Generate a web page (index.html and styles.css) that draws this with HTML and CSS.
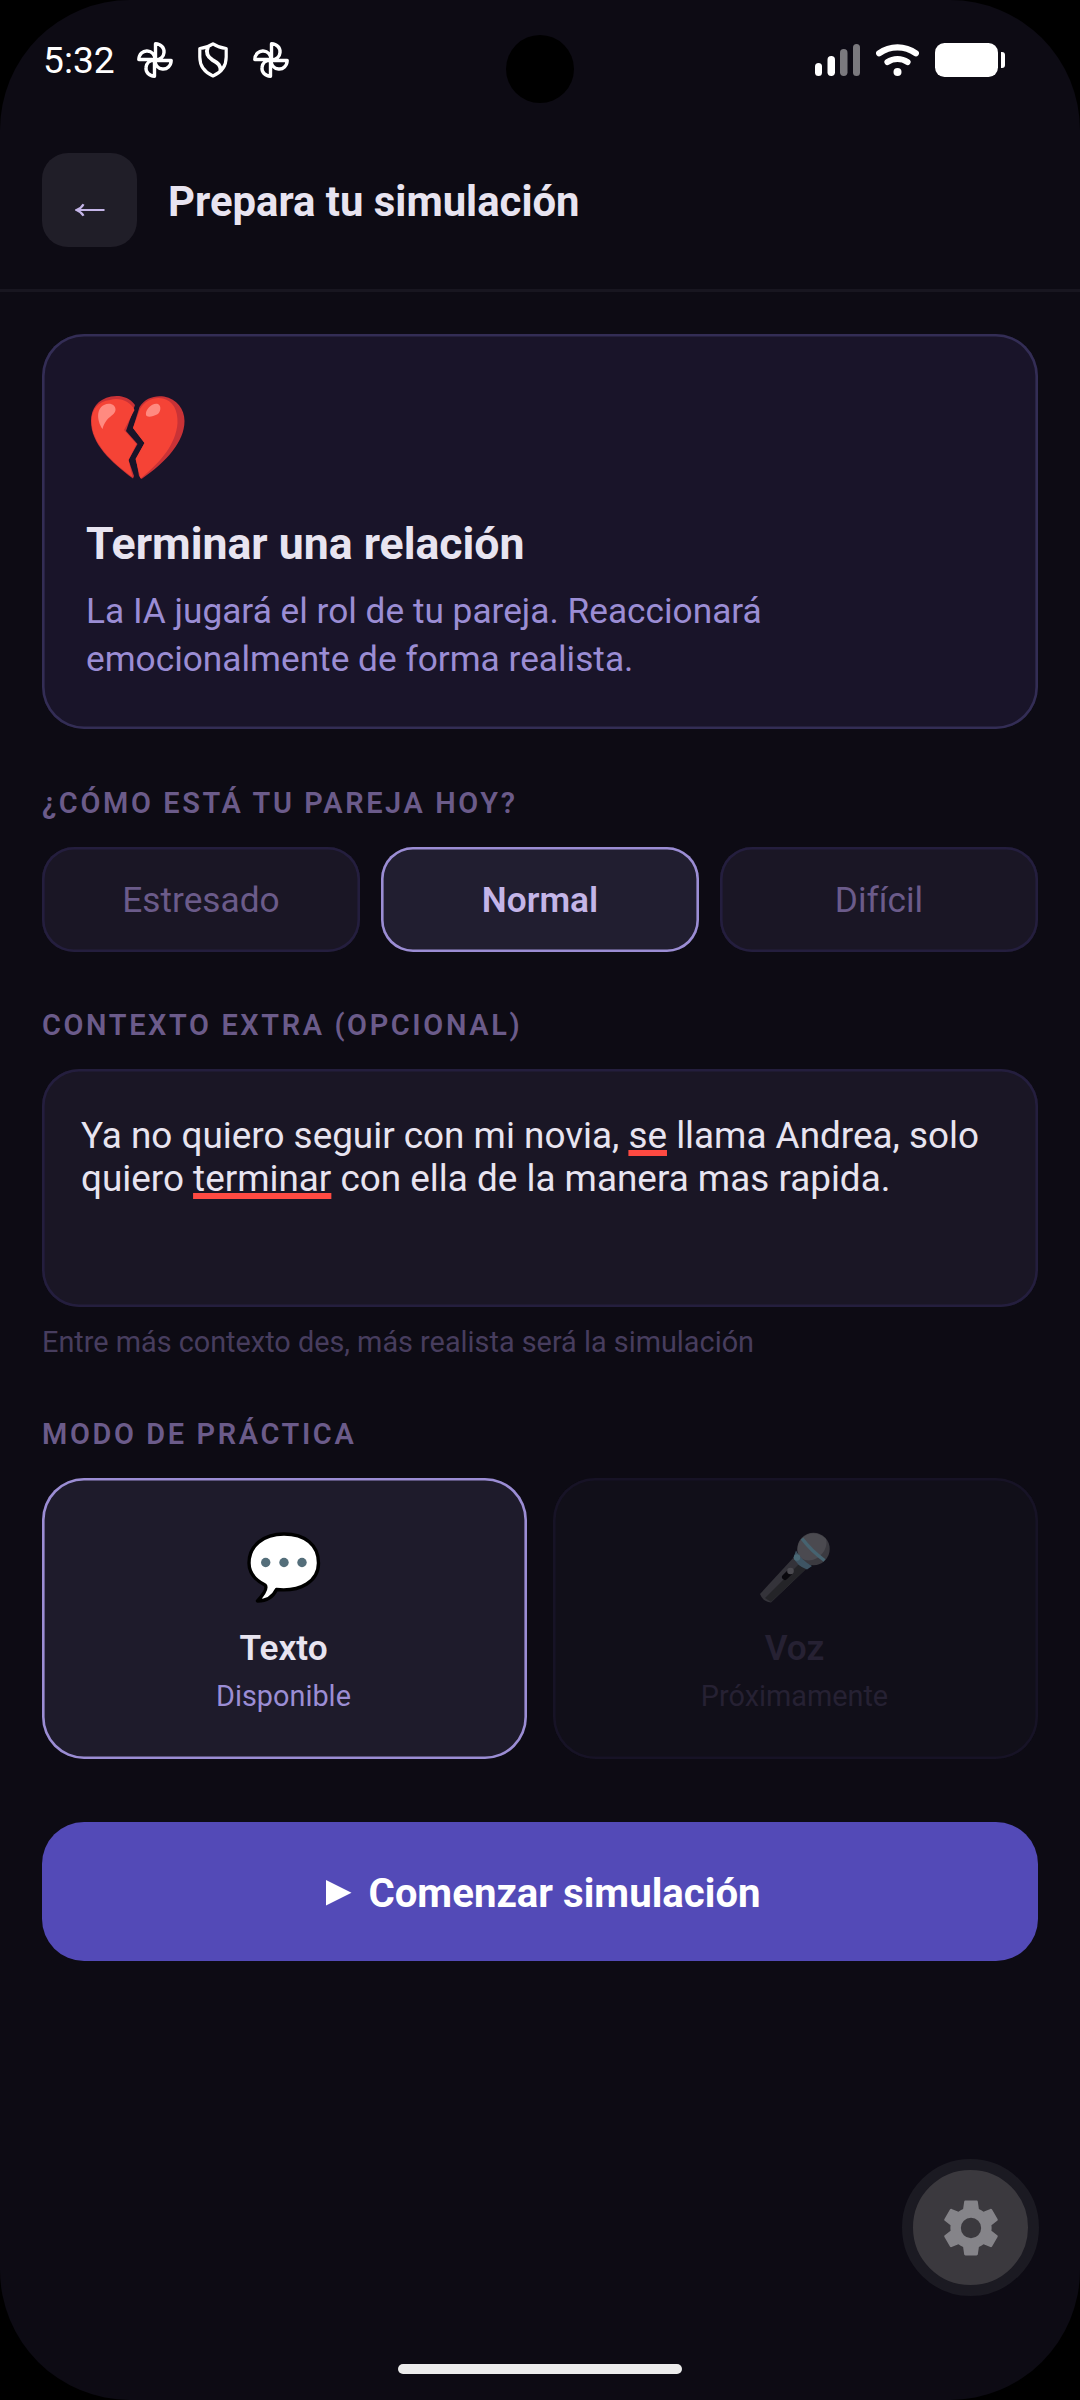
FILE: index.html
```html
<!DOCTYPE html>
<html lang="es">
<head>
<meta charset="utf-8">
<title>Prepara tu simulación</title>
<link rel="stylesheet" href="styles.css">
</head>
<body>
<svg class="defs" width="0" height="0" aria-hidden="true">
  <symbol id="pinwheel" viewBox="0 0 36 36">
    <g fill="none" stroke="#fff" stroke-width="3.4" stroke-linejoin="round">
      <path d="M18.500 18V1.800C24 2 27.500 6 27 10.500C26.700 14.500 23.500 17.800 18.500 18Z"/>
      <path d="M18 18.500H34.200C34 24 30 27.500 25.500 27C21.500 26.700 18.200 23.500 18 18.500Z"/>
      <path d="M17.500 18V34.200C12 34 8.500 30 9 25.500C9.300 21.500 12.500 18.200 17.500 18Z"/>
      <path d="M18 17.500H1.800C2 12 6 8.500 10.500 9C14.500 9.300 17.800 12.500 18 17.500Z"/>
    </g>
  </symbol>
</svg>
<div class="screen">
  <div class="camera"></div>
  <div class="status">
    <span class="time">5:32</span>
    <svg class="pin" width="36" height="36"><use href="#pinwheel"/></svg>
    <svg class="shield" width="30" height="36" viewBox="0 0 30 36" fill="none" stroke="#fff" stroke-width="3.2" stroke-linejoin="round"><path d="M15 1.800C11 4.500 6.500 6 1.800 6.500V15C1.800 24 7 30.500 15 34C23 30.500 28.200 24 28.200 15V6.500C23.500 6 19 4.500 15 1.800Z"/><path d="M10 4.500C7.500 11 9.500 15 14.500 18C20 21 23 23.500 22.500 29" stroke-width="3.800"/></svg>
    <svg class="pin" width="36" height="36"><use href="#pinwheel"/></svg>
    <svg class="signal" width="45" height="32" viewBox="0 0 45 32" fill="#fff"><rect x="0" y="19" width="7" height="13" rx="3.500"/><rect x="12.500" y="12" width="7.500" height="20" rx="3.700"/><g opacity=".45"><rect x="25" y="5" width="7.500" height="27" rx="3.700"/><rect x="38" y="0" width="7" height="32" rx="3.500"/></g></svg>
    <svg class="wifi" width="43" height="32" viewBox="0 0 43 32" fill="none" stroke="#fff" stroke-width="6.200" stroke-linecap="round"><path d="M3.200 9.300C14 1.300 29 1.300 39.800 9.300"/><path d="M11.500 18C17.500 14 25.500 14 31.500 18"/><circle cx="21.500" cy="28" r="4" fill="#fff" stroke="none"/></svg>
    <svg class="battery" width="70" height="34" viewBox="0 0 70 34" fill="#fff"><rect width="63" height="34" rx="9.500"/><path d="M66 9H67C69 9 70 10 70 12V22C70 24 69 25 67 25H66Z"/></svg>
  </div>
  <header class="header">
    <button class="back" aria-label="Volver"><svg width="30" height="14" viewBox="0 0 30 14" fill="none" stroke="#c4b5e8" stroke-width="2.200"><path d="M1.500 7H29.500M8.500 1.200Q6.500 5 1.500 7Q6.500 9 8.500 12.800"/></svg></button>
    <h1>Prepara tu simulación</h1>
  </header>
  <main>
    <section class="scenario">
      <svg class="heart" width="94" height="83" viewBox="0 0 94 83">
        <path fill="#c93236" d="M44 9C38 1 29-1 20 .600C7 3 0 13 0 25C0 48 20 66 42 82.500L43 80L37.500 64L46.500 48L35 35Z"/>
        <path fill="#f54336" d="M43.500 14C40 6 29 1 19 4C7 5 .500 14 .500 25C1 48 21 66 41.500 81L37.500 64L45.500 48L33 34Z"/>
        <path fill="#c93236" d="M48.500 11C54 2 64-1 73 .500C86 3 93.500 13 93.500 25C93.500 46 75 66 50.500 83L48 80L45 63L53.500 47L42 32Z"/>
        <path fill="#f54336" d="M49 13C54 4 64 .500 72 2.500C82 5 87 14 86.500 27C85 48 70 66 49.500 82.500L44.500 63L53.500 47L42 32Z"/>
        <path fill="#ff8a80" d="M11.500 33C6 25 5 13 13 9C19 6 25 9 24.500 14C24 20 15 20 11.500 33Z"/>
        <path fill="#ff8a80" d="M55 19C54 13 62 6 67 8C71 10 69.500 17 66 18.500C62 20.500 56 22 55 19Z"/>
      </svg>
      <h2>Terminar una relación</h2>
      <p>La IA jugará el rol de tu pareja. Reaccionará emocionalmente de forma realista.</p>
    </section>

    <h3 class="label">¿CÓMO ESTÁ TU PAREJA HOY?</h3>
    <div class="moods">
      <button class="mood">Estresado</button>
      <button class="mood selected">Normal</button>
      <button class="mood">Difícil</button>
    </div>

    <h3 class="label">CONTEXTO EXTRA (OPCIONAL)</h3>
    <div class="context">Ya no quiero seguir con mi novia, <span class="typo">se</span> llama Andrea, solo quiero <span class="typo">terminar</span> con ella de la manera mas rapida.</div>
    <p class="hint">Entre más contexto des, más realista será la simulación</p>

    <h3 class="label">MODO DE PRÁCTICA</h3>
    <div class="modes">
      <div class="mode selected">
        <svg width="74" height="72" viewBox="0 0 74 72"><path fill="#fff" stroke="#000" stroke-width="3.400" stroke-linejoin="round" d="M37 2C16 2 2 14 2 31C2 41 8 48 18 53C21 56 16 63 10.500 69C19 69 26 65 29.500 57.500C54 60 71.500 49 71.500 31C71.500 13 58 2 37 2Z"/><g fill="#546e7a"><circle cx="18.700" cy="30.500" r="4.700"/><circle cx="37" cy="30.500" r="4.700"/><circle cx="55" cy="30.500" r="4.700"/></g></svg>
        <strong>Texto</strong>
        <span>Disponible</span>
      </div>
      <div class="mode disabled">
        <svg width="70" height="70" viewBox="0 0 70 70">
          <path fill="#34333a" d="M0 61L34 24L46 36L11 69.500Q3 69 0 61Z"/>
          <path fill="#242428" d="M5 65L40 30L46 36L11 69Z"/>
          <path d="M25 44L29 40" stroke="#09080d" stroke-width="6" stroke-linecap="round"/><circle cx="30.500" cy="38" r="3.300" fill="#4b4a50"/>
          <circle cx="53.500" cy="16" r="16.200" fill="#3b3a40"/>
          <path fill="#4b4a50" d="M37.500 18A16.200 16.200 0 0 1 66 6C69 16 58 30 45 27Q39 25 37.500 18Z"/>
          <path d="M42 5.500Q51 17.500 64.500 27.500" fill="none" stroke="#466370" stroke-width="3.400"/>
          <path fill="#3e5463" d="M36 17.500Q41 27 52 33L47 36.500Q37 33 33.500 24.500Z"/><circle cx="37" cy="24.500" r="3.200" fill="#4a6875"/>
        </svg>
        <strong>Voz</strong>
        <span>Próximamente</span>
      </div>
    </div>

    <button class="start"><svg width="26" height="26" viewBox="0 0 26 26" fill="#fff"><path d="M0 0L25.500 12.700L0 25.500Z"/></svg>Comenzar simulación</button>
  </main>
  <div class="fab"><svg width="66" height="66" viewBox="0 0 24 24" fill="#858489"><path d="M19.430 12.980c.04-.32.07-.64.07-.98s-.03-.66-.07-.98l2.110-1.650c.19-.15.24-.42.12-.64l-2-3.460c-.12-.22-.39-.3-.61-.22l-2.490 1c-.52-.4-1.080-.73-1.690-.98l-.38-2.650C14.460 2.180 14.250 2 14 2h-4c-.25 0-.46.18-.49.42l-.38 2.650c-.61.25-1.170.59-1.690.98l-2.490-1c-.23-.09-.49 0-.61.22l-2 3.460c-.13.22-.07.49.12.64l2.110 1.650c-.04.32-.07.65-.07.98s.03.66.07.98l-2.110 1.650c-.19.15-.24.42-.12.64l2 3.460c.12.22.39.3.61.22l2.490-1c.52.4 1.080.73 1.690.98l.38 2.650c.03.24.24.42.49.42h4c.25 0 .46-.18.49-.42l.38-2.650c.61-.25 1.170-.59 1.690-.98l2.490 1c.23.09.49 0 .61-.22l2-3.460c.12-.22.07-.49-.12-.64l-2.110-1.650zM12 15.700a3.700 3.700 0 1 1 0-7.400 3.700 3.700 0 0 1 0 7.400z"/></svg></div>
  <div class="homebar"></div>
</div>
</body>
</html>
```
FILE: styles.css
```css
* { box-sizing: border-box; margin: 0; padding: 0; }
body { background: #000; font-family: Roboto, "Noto Sans", sans-serif; }
button { border: 0; font-family: inherit; }
.defs { position: absolute; }

.screen {
  position: relative;
  width: 1080px;
  height: 2400px;
  overflow: hidden;
  border-radius: 130px;
  background: #0d0b14;
}
.camera {
  position: absolute;
  left: 506px;
  top: 35px;
  width: 68px;
  height: 68px;
  border-radius: 50%;
  background: #000;
}

/* Status bar */
.status {
  display: flex;
  align-items: center;
  height: 120px;
  padding: 0 75px 0 43px;
}
.time { width: 94px; color: #fff; font-size: 37.200px; line-height: 44px; margin-top: -1px; }
.shield { margin: 0 25px; }
.signal { margin-left: auto; }
.wifi { margin: 0 16px; }

/* Header */
.header {
  display: flex;
  align-items: center;
  gap: 31px;
  height: 172px;
  padding: 33px 42px 45px;
  box-shadow: inset 0 -3px #181620;
}
.back {
  display: flex;
  align-items: center;
  justify-content: center;
  width: 95px;
  height: 94px;
  padding-top: 19px;
  border-radius: 26px;
  background: #201e28;
}
h1 { padding-top: 4px; color: #e8e4f0; font-size: 41.850px; font-weight: 700; line-height: 50px; }

main { padding: 42px; }

/* Scenario card */
.scenario {
  height: 395px;
  padding: 62px 44px;
  border-radius: 42px;
  background: #191429;
  box-shadow: inset 0 0 0 2.600px #332d55;
}
.heart { display: block; margin-left: 5px; }
h2 { margin-top: 38px; color: #e8e4f0; font-size: 44.600px; font-weight: 700; line-height: 54px; }
.scenario p { margin-top: 16px; color: #9b8dd4; font-size: 35.250px; line-height: 48px; }

.label {
  color: #6b5b8a;
  font-size: 28.900px;
  font-weight: 600;
  line-height: 34px;
  letter-spacing: 2.640px;
}

/* Mood picker */
.scenario + .label { margin-top: 57px; }
.moods { display: flex; gap: 21px; margin-top: 27px; }
.mood {
  flex: 1;
  height: 105px;
  border-radius: 32px;
  background: #1a1625;
  box-shadow: inset 0 0 0 2.600px #241e3e;
  color: #6b5b8a;
  font-size: 35.250px;
}
.mood.selected {
  background: #211e30;
  box-shadow: inset 0 0 0 2.600px #9b8dd4;
  color: #c4b5e8;
  font-weight: 600;
}

/* Extra context */
.moods + .label { margin-top: 56px; }
.context {
  height: 238px;
  margin-top: 27px;
  padding: 45px 39px 0;
  border-radius: 37px;
  background: #1a1625;
  box-shadow: inset 0 0 0 2.600px #241e3e;
  color: #e8e4f0;
  font-size: 36.870px;
  line-height: 43px;
}
.typo {
  text-decoration: underline #ff4a42 5.500px;
  text-decoration-skip-ink: none;
  text-underline-offset: 2px;
}
.hint { margin-top: 18px; color: #473d5e; font-size: 28.840px; line-height: 34px; }

/* Practice mode */
.hint + .label { margin-top: 58px; }
.modes { display: flex; gap: 26px; margin-top: 27px; }
.mode {
  display: flex;
  flex: 1;
  flex-direction: column;
  align-items: center;
  height: 281px;
  padding: 54px 2px 0 0;
  border-radius: 42px;
}
.mode svg { height: 72px; }
.mode strong { margin-top: 23px; font-size: 35.250px; font-weight: 600; line-height: 42px; }
.mode span { margin-top: 10px; font-size: 28.840px; line-height: 34px; }
.mode.selected { background: #1e1b2b; box-shadow: inset 0 0 0 2.600px #9b8dd4; color: #e8e4f0; }
.mode.selected span { color: #9b8dd4; }
.mode.disabled { background: #110f19; box-shadow: inset 0 0 0 2.600px #171326; color: #262133; }

.start {
  display: flex;
  align-items: center;
  justify-content: center;
  gap: 16px;
  width: 100%;
  height: 139px;
  margin-top: 63px;
  padding: 3px 0 0 7px;
  border-radius: 42px;
  background: #534ab7;
  color: #fff;
  font-size: 40.200px;
  font-weight: 700;
}

.fab {
  position: absolute;
  left: 902px;
  top: 2159px;
  display: flex;
  align-items: center;
  justify-content: center;
  width: 137px;
  height: 137px;
  border: 11px solid #1b1a22;
  border-radius: 50%;
  background: #3b393e;
}
.homebar {
  position: absolute;
  left: 398px;
  top: 2364px;
  width: 284px;
  height: 10px;
  border-radius: 5px;
  background: #ececec;
}
```
